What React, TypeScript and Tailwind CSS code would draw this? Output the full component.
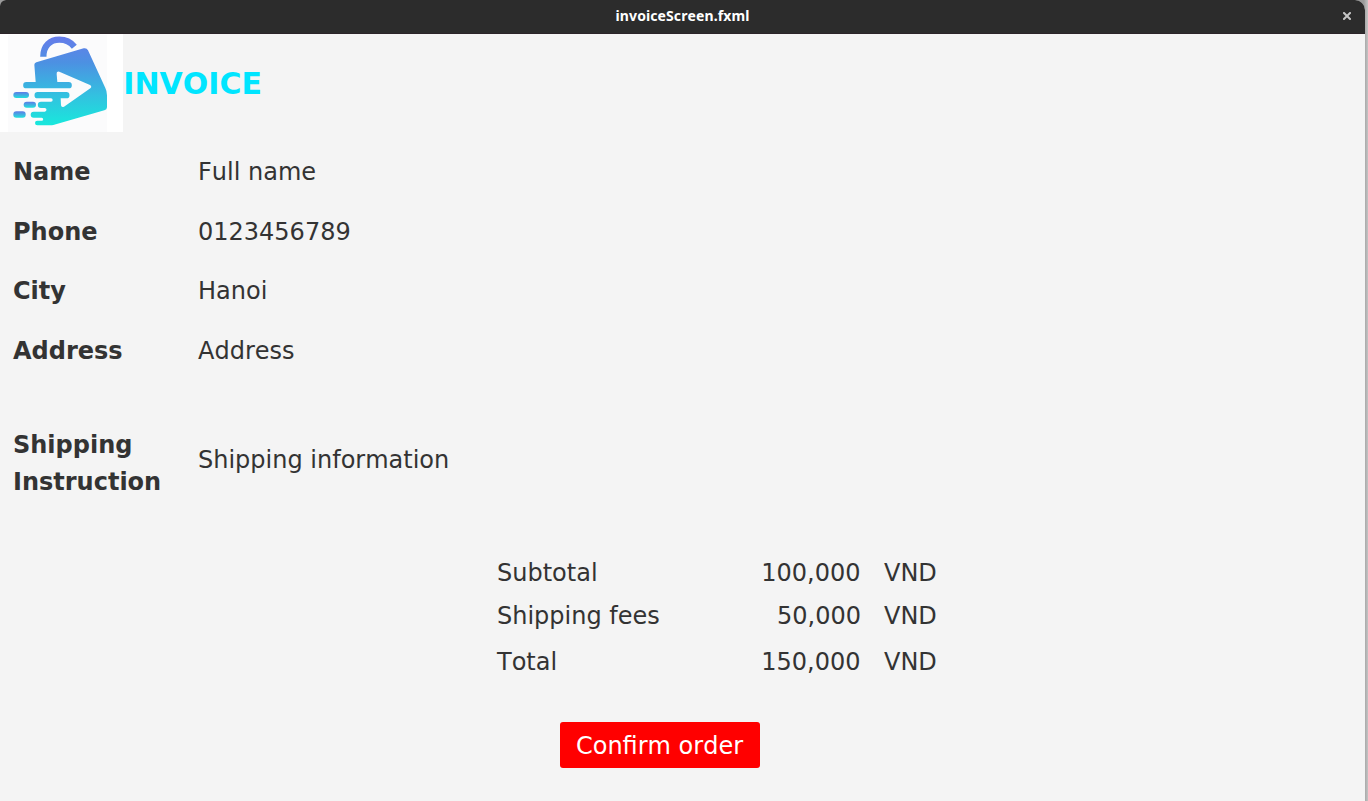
import React from "react";

const details = [
  { label: "Name", value: "Full name", row: "h-[60px]" },
  { label: "Phone", value: "0123456789", row: "h-[60px]" },
  { label: "City", value: "Hanoi", row: "h-[58px]" },
  { label: "Address", value: "Address", row: "h-[61px]" },
];

const amounts = [
  { label: "Subtotal", value: "100,000", row: "h-[43px]", width: "w-[159.5px]", gap: "ml-[23.5px]" },
  { label: "Shipping fees", value: "50,000", row: "h-[43px]", width: "w-[160px]", gap: "ml-[23px]" },
  { label: "Total", value: "150,000", row: "h-[49px]", width: "w-[159.5px]", gap: "ml-[23.5px]" },
];

function Logo() {
  return (
    <svg className="block h-[98px] w-[123px] shrink-0" viewBox="0 12 369 294" aria-hidden="true">
      <defs>
        <linearGradient id="bag" gradientUnits="userSpaceOnUse" x1="0" y1="18" x2="0" y2="286">
          <stop offset="0" stopColor="#667bea" />
          <stop offset="0.3" stopColor="#4c91e2" />
          <stop offset="0.65" stopColor="#34bfe0" />
          <stop offset="1" stopColor="#18e8dc" />
        </linearGradient>
        <linearGradient id="dash" x1="0" y1="0" x2="0" y2="1">
          <stop offset="0.1" stopColor="#5b84e6" />
          <stop offset="1" stopColor="#22e2dc" />
        </linearGradient>
      </defs>
      <rect y="12" width="369" height="294" fill="#fff" />
      <rect x="24" y="14" width="297" height="292" fill="#fbfbfc" />
      <path d="M130 80 C130 46 151 29 178 29 C196 29 211 35 223 50" fill="none" stroke="url(#bag)" strokeWidth="19" />
      <path
        fill="url(#bag)"
        fillRule="evenodd"
        d="M103 104 Q103 99 109 97 L251 55 Q260 53 264 61 L316 174 Q321 184 321 196 V232 Q321 239 313 241 L160 285 Q156 286 150 286 H112 A7 7 0 0 1 112 272 H125 A4.500 4.500 0 0 0 125 263 H101 A9 9 0 0 1 101 245 H134 A5 5 0 0 0 134 234 H123 A9 9 0 0 1 123 215 H153 A5 5 0 0 0 153 205 H113 A9 9 0 0 1 113 186 H199 A9 9 0 0 1 199 205 H182 L183 226 Q184 233 192 230 L271 175 Q277 170 270 165 L178 125 Q169 122 170 132 L172 156 H206 A9 9 0 0 1 206 175 H79 A9 9 0 0 1 79 156 H107 Z"
      />
      <rect x="40" y="186" width="47" height="18" rx="9" fill="url(#dash)" />
      <rect x="71" y="215" width="37" height="18" rx="9" fill="url(#dash)" />
      <rect x="40" y="244" width="37" height="19" rx="9" fill="url(#dash)" />
    </svg>
  );
}

export default function App() {
  return (
    <div className="flex h-[801px] w-[1368px] overflow-hidden bg-[linear-gradient(to_right,#9b9b9b_1364px,#a9a9a9_1365px,#c4c4c4_1368px)] font-['DejaVu_Sans',sans-serif] text-2xl text-[#333] [font-kerning:none]">
      <div className="flex w-[1365px] flex-col overflow-hidden rounded-tl-md rounded-tr-[10px] bg-[#f4f4f4]">
        <header className="grid h-[34px] shrink-0 grid-cols-[1fr_auto_1fr] items-center border-b border-[#2c2429] bg-[#2c2c2c] pr-[14px] pb-px pl-[14px]">
          <span />
          <h1 className="font-['Noto_Sans',sans-serif] text-[14px] leading-5 font-bold tracking-[0.1px] whitespace-nowrap text-white">
            invoiceScreen.fxml
          </h1>
          <button className="justify-self-end" aria-label="Close">
            <svg className="block h-2 w-2" viewBox="0 0 8 8">
              <path d="M1 1 7 7M7 1 1 7" stroke="#c6c6c6" strokeWidth="2" strokeLinecap="square" />
            </svg>
          </button>
        </header>

        <div className="flex h-[98px] shrink-0 items-center">
          <Logo />
          <h2 className="pt-[2px] pl-[0.3px] text-[30px] leading-9 font-bold text-[#00e5ff]">INVOICE</h2>
        </div>

        <dl className="mt-[10px] shrink-0 pl-[13px]">
          {details.map((d) => (
            <div key={d.label} className={`flex items-center ${d.row}`}>
              <dt className="w-[185px] font-bold">{d.label}</dt>
              <dd>{d.value}</dd>
            </div>
          ))}
          <div className="mt-[43px] flex h-[80px] items-center">
            <dt className="w-[185px] leading-[37px] font-bold">
              Shipping
              <br />
              Instruction
            </dt>
            <dd className="pb-[9px]">Shipping information</dd>
          </div>
        </dl>

        <div className="mt-[47px] ml-[497px] shrink-0">
          {amounts.map((a) => (
            <div key={a.label} className={`flex items-center ${a.row}`}>
              <span className="w-[204px]">{a.label}</span>
              <span className={`text-right ${a.width}`}>{a.value}</span>
              <span className={a.gap}>VND</span>
            </div>
          ))}
        </div>

        <button className="mt-[36px] ml-[560px] h-[46px] w-[200px] shrink-0 rounded-[3px] bg-[#ff0000] pt-[2px] pr-px text-white">
          Confirm order
        </button>
      </div>
    </div>
  );
}
